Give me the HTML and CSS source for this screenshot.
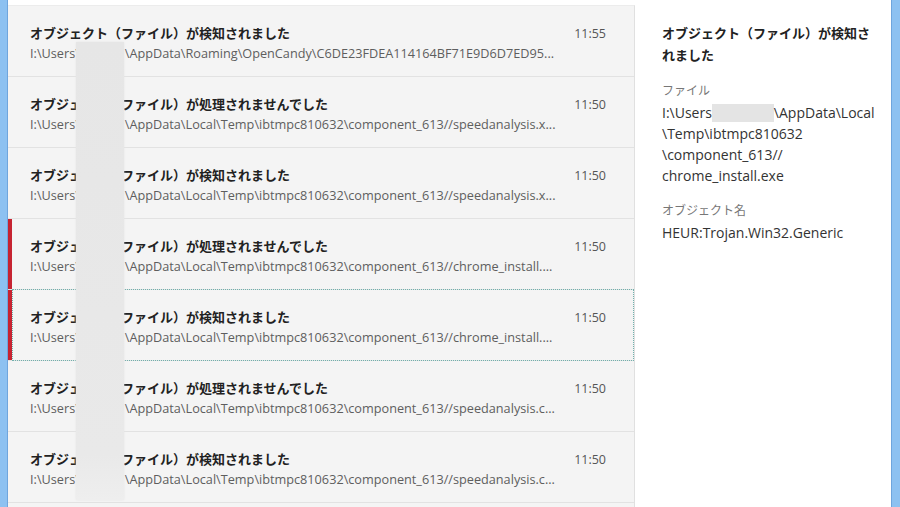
FILE: index.html
```html
<!DOCTYPE html>
<html lang="ja">
<head>
  <meta charset="UTF-8">
  <title>検知されたオブジェクト</title>
  <link rel="stylesheet" href="styles.css">
</head>
<body>
  <div class="edge-left"></div>

  <div class="list">
    <div class="item">
      <div class="item-text">
        <div class="item-title">オブジェクト（ファイル）が検知されました</div>
        <div class="item-path">I:\Users\<span class="user"></span>\AppData\Roaming\OpenCandy\C6DE23FDEA114164BF71E9D6D7ED95...</div>
      </div>
      <div class="item-time">11:55</div>
    </div>
    <div class="item">
      <div class="item-text">
        <div class="item-title">オブジェクト（ファイル）が処理されませんでした</div>
        <div class="item-path">I:\Users\<span class="user"></span>\AppData\Local\Temp\ibtmpc810632\component_613//speedanalysis.x...</div>
      </div>
      <div class="item-time">11:50</div>
    </div>
    <div class="item">
      <div class="item-text">
        <div class="item-title">オブジェクト（ファイル）が検知されました</div>
        <div class="item-path">I:\Users\<span class="user"></span>\AppData\Local\Temp\ibtmpc810632\component_613//speedanalysis.x...</div>
      </div>
      <div class="item-time">11:50</div>
    </div>
    <div class="item flagged">
      <div class="item-text">
        <div class="item-title">オブジェクト（ファイル）が処理されませんでした</div>
        <div class="item-path">I:\Users\<span class="user"></span>\AppData\Local\Temp\ibtmpc810632\component_613//chrome_install....</div>
      </div>
      <div class="item-time">11:50</div>
    </div>
    <div class="item flagged selected">
      <div class="item-text">
        <div class="item-title">オブジェクト（ファイル）が検知されました</div>
        <div class="item-path">I:\Users\<span class="user"></span>\AppData\Local\Temp\ibtmpc810632\component_613//chrome_install....</div>
      </div>
      <div class="item-time">11:50</div>
    </div>
    <div class="item">
      <div class="item-text">
        <div class="item-title">オブジェクト（ファイル）が処理されませんでした</div>
        <div class="item-path">I:\Users\<span class="user"></span>\AppData\Local\Temp\ibtmpc810632\component_613//speedanalysis.c...</div>
      </div>
      <div class="item-time">11:50</div>
    </div>
    <div class="item">
      <div class="item-text">
        <div class="item-title">オブジェクト（ファイル）が検知されました</div>
        <div class="item-path">I:\Users\<span class="user"></span>\AppData\Local\Temp\ibtmpc810632\component_613//speedanalysis.c...</div>
      </div>
      <div class="item-time">11:50</div>
    </div>

    <!-- username blurred out -->
    <div class="redact"></div>
  </div>

  <div class="detail">
    <h2 class="detail-title">オブジェクト（ファイル）が検知さ<br>れました</h2>
    <div class="field">
      <div class="field-label">ファイル</div>
      <div class="field-value">I:\Users<span class="mask"></span>\AppData\Local<br>\Temp\ibtmpc810632<br>\component_613//<br>chrome_install.exe</div>
    </div>
    <div class="field">
      <div class="field-label">オブジェクト名</div>
      <div class="field-value">HEUR:Trojan.Win32.Generic</div>
    </div>
  </div>

  <div class="edge-right"></div>
</body>
</html>
```

FILE: styles.css
```css
html, body {
  margin: 0;
  height: 100%;
  overflow: hidden;
}
body {
  font-family: "Open Sans", "Noto Sans CJK JP", sans-serif;
  background: #fff;
  color: #333;
  display: flex;
}
.edge-left {
  width: 7px;
  background: #8dc1f1;
  border-right: 1px solid #6fa5dd;
}
.edge-right {
  width: 8px;
  background: #8dc1f1;
  border-left: 1px solid #6fa5dd;
}

/* list */
.list {
  position: relative;
  box-sizing: border-box;
  width: 627px;
  margin-top: 5px;
  background: #f4f4f4;
  border-top: 1px solid #ececec;
  border-right: 1px solid #e0e0e0;
}
.item {
  position: relative;
  display: flex;
  box-sizing: border-box;
  height: 71px;
  padding: 18px 28px 0 22px;
  border-bottom: 1px solid #e2e2e2;
}
.item.flagged {
  box-shadow: inset 4px 0 0 #c62331;
}
.item.selected::after {
  content: "";
  position: absolute;
  top: -1px;
  right: 0;
  bottom: -1px;
  left: 4px;
  border: 1px dotted #6fb0ac;
}
.item-text {
  flex: 1;
  min-width: 0;
}
.item-title {
  font-size: 13px;
  font-weight: bold;
  line-height: 18px;
  color: #222;
  white-space: nowrap;
}
.item-path {
  margin-top: 3px;
  font-size: 12.7px;
  line-height: 16px;
  color: #5e5e5e;
  white-space: nowrap;
  overflow: hidden;
}
.user {
  display: inline-block;
  width: 45px;
}
.item-time {
  margin-left: 16px;
  font-size: 12.5px;
  line-height: 20px;
  color: #555;
}
.redact {
  position: absolute;
  left: 68px;
  top: 36px;
  width: 48px;
  height: 458px;
  background: linear-gradient(to bottom, #e6e6e6 0%, #e9e9e9 90%, #eeeeee 100%);
  box-shadow: 0 0 2px #e6e6e6;
}

/* detail pane */
.detail {
  flex: 1;
  padding: 22px 4px 0 27px;
}
.detail-title {
  margin: 0;
  font-size: 13px;
  font-weight: bold;
  line-height: 22px;
  color: #222;
}
.field {
  margin-top: 16px;
}
.field-label {
  font-size: 12px;
  line-height: 18px;
  color: #777;
}
.field-value {
  margin-top: 2px;
  font-size: 14px;
  line-height: 21px;
  color: #333;
}
.mask {
  display: inline-block;
  width: 62px;
  height: 18px;
  vertical-align: -4px;
  background: #e4e4e4;
}
```
